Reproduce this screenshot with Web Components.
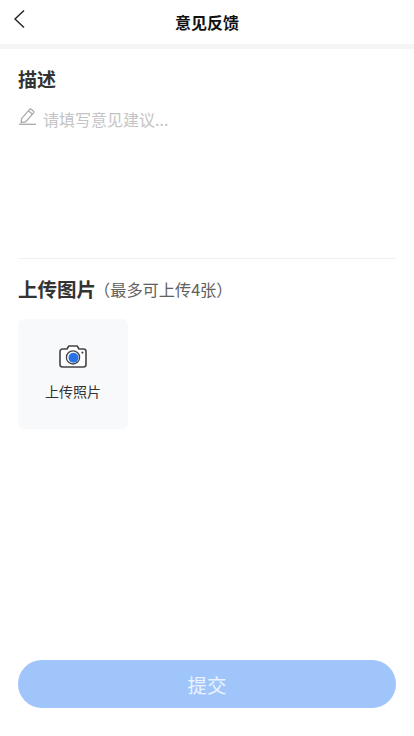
<!DOCTYPE html>
<html lang="zh">
<head>
<meta charset="utf-8">
<title>意见反馈</title>
<style>
html, body { margin: 0; padding: 0; background: #fff; }
body { font-family: "Noto Sans CJK SC", "Noto Sans", sans-serif; }
</style>
</head>
<body>
<feedback-page>
  <nav-bar>意见反馈</nav-bar>
  <desc-field label="描述" placeholder="请填写意见建议..."></desc-field>
  <upload-field label="上传图片" hint="（最多可上传4张）" tile="上传照片"></upload-field>
  <submit-button slot="footer">提交</submit-button>
</feedback-page>
<script>
class FeedbackPage extends HTMLElement {
    constructor() {
        super()
        this.attachShadow({ mode: "open" })
        this.shadowRoot.innerHTML = `
        <style>
            :host { display: flex; flex-direction: column; width: 414px; height: 736px; overflow: hidden; background: #fff; }
            .footer { margin-top: auto; padding: 0 18px 28px; }
        </style>
        <slot></slot>
        <div class="footer"><slot name="footer"></slot></div>
        `
    }
}
class NavBar extends HTMLElement {
    constructor() {
        super()
        this.attachShadow({ mode: "open" })
        this.shadowRoot.innerHTML = `
        <style>
            :host { display: block; border-bottom: 5px solid #f5f5f5; }
            .bar { position: relative; height: 44px; display: flex; align-items: center; justify-content: center; }
            h1 { margin: 0; font-size: 16px; font-weight: 700; color: #111; line-height: 20px; }
            svg { position: absolute; left: 13px; top: 9px; }
        </style>
        <div class="bar">
            <svg width="14" height="20" viewBox="0 0 14 20"><path d="M11 1.5 L2 10 L11 18.5" fill="none" stroke="#222" stroke-width="1.4"/></svg>
            <h1><slot></slot></h1>
        </div>
        `
    }
}
class DescField extends HTMLElement {
    constructor() {
        super()
        this.attachShadow({ mode: "open" })
        this.shadowRoot.innerHTML = `
        <style>
            :host { display: block; margin: 0 18px; height: 209px; border-bottom: 1px solid #f0f0f0; }
            h2 { margin: 0; padding-top: 16px; font-size: 19px; line-height: 28px; font-weight: 700; color: #333; }
            .row { display: flex; align-items: flex-start; gap: 7px; margin-top: 14px; height: 24px; }
            svg { margin: 1px 0 0 1px; flex: none; }
            span { font-size: 16px; color: #c4c4c4; line-height: 24px; }
        </style>
        <h2>${this.getAttribute("label")}</h2>
        <div class="row">
            <svg width="17" height="17" viewBox="0 0 17 17" fill="none" stroke="#aaa" stroke-width="1.3">
                <path d="M2.6 10.6 L10.6 1.4 a1.2 1.2 0 0 1 1.7 -.1 l2.2 1.9 a1.2 1.2 0 0 1 .1 1.7 L6.6 14 L2.2 14.6 Z"/>
                <path d="M9.4 2.8 L13.4 6.2"/>
                <path d="M0 16.3 H17"/>
            </svg>
            <span>${this.getAttribute("placeholder")}</span>
        </div>
        `
    }
}
class UploadField extends HTMLElement {
    constructor() {
        super()
        this.attachShadow({ mode: "open" })
        this.shadowRoot.innerHTML = `
        <style>
            :host { display: block; margin: 0 18px; }
            .head { display: flex; align-items: center; padding-top: 16px; height: 28px; }
            h2 { margin: 0; font-size: 19.5px; line-height: 28px; font-weight: 700; color: #333; }
            .hint { font-size: 16.2px; color: #606060; margin-left: -2px; }
            .tile { margin-top: 16px; width: 110px; height: 110px; border-radius: 6px; background: #f8f9fb; display: flex; flex-direction: column; align-items: center; padding-top: 26px; box-sizing: border-box; }
            svg { display: block; }
            .name { margin-top: 12px; font-size: 14px; line-height: 20px; color: #333; }
        </style>
        <div class="head"><h2>${this.getAttribute("label")}</h2><span class="hint">${this.getAttribute("hint")}</span></div>
        <div class="tile">
            <svg width="28" height="24" viewBox="0 0 28 24">
                <path d="M3.5 4 H8 L9.8 1 H18.2 L20 4 H24.5 A2.5 2.5 0 0 1 27 6.5 V19.5 A2.5 2.5 0 0 1 24.5 22 H3.5 A2.5 2.5 0 0 1 1 19.5 V6.5 A2.5 2.5 0 0 1 3.5 4 Z" fill="#fff" stroke="#444" stroke-width="1.6" stroke-linejoin="round"/>
                <circle cx="14" cy="12.4" r="6.6" fill="#fff" stroke="#444" stroke-width="1.3"/>
                <circle cx="14.5" cy="12.8" r="5" fill="#2673e8"/>
                <circle cx="23.4" cy="7.6" r="1.1" fill="#444"/>
            </svg>
            <div class="name">${this.getAttribute("tile")}</div>
        </div>
        `
    }
}
class SubmitButton extends HTMLElement {
    constructor() {
        super()
        this.attachShadow({ mode: "open" })
        this.shadowRoot.innerHTML = `
        <style>
            :host { display: flex; align-items: center; justify-content: center; height: 48px; border-radius: 24px; background: #9fc5fb; color: #eaf3ff; font-size: 19.5px; }
        </style>
        <slot></slot>
        `
    }
}
customElements.define("feedback-page", FeedbackPage)
customElements.define("nav-bar", NavBar)
customElements.define("desc-field", DescField)
customElements.define("upload-field", UploadField)
customElements.define("submit-button", SubmitButton)
</script>
</body>
</html>
